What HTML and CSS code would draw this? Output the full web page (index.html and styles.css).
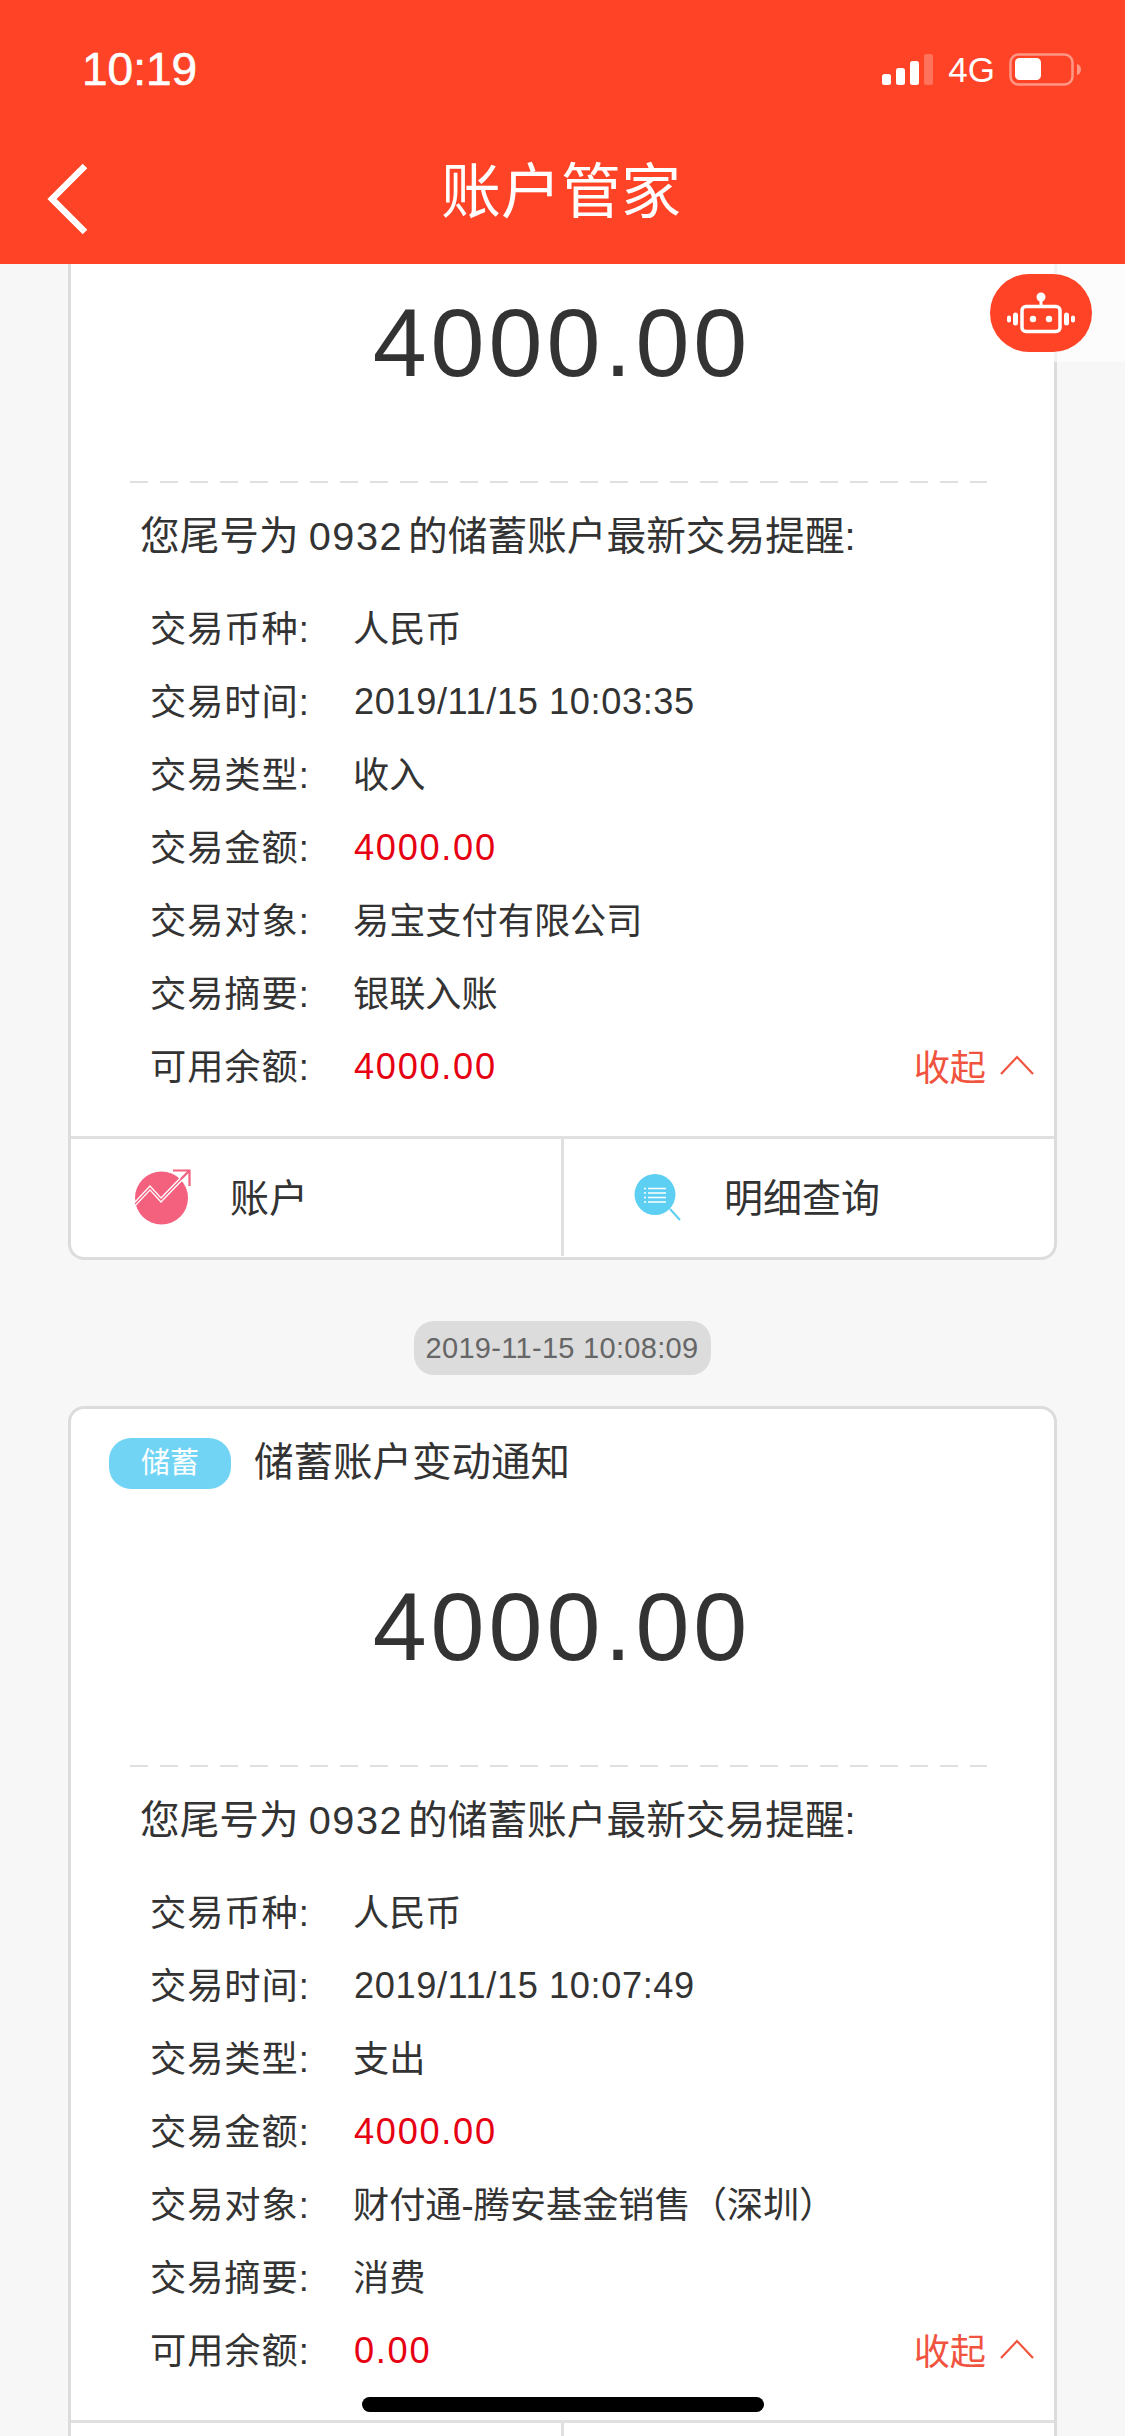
FILE: index.html
```html
<!DOCTYPE html>
<html lang="zh">
<head>
<meta charset="utf-8">
<title>账户管家</title>
<link rel="stylesheet" href="styles.css">
</head>
<body>
<div class="screen">
  <header class="header">
    <div class="status">
      <span class="time">10:19</span>
      <div class="status-right">
        <svg class="signal" width="51" height="31" viewBox="0 0 51 31">
          <rect x="0" y="20" width="9" height="11" rx="2.5" fill="#fff"/>
          <rect x="14" y="14" width="9" height="17" rx="2.5" fill="#fff"/>
          <rect x="28" y="7" width="9" height="24" rx="2.5" fill="#fff"/>
          <rect x="42" y="0" width="9" height="31" rx="2.5" fill="#fff" opacity=".25"/>
        </svg>
        <span class="net">4G</span>
        <svg class="battery" width="72" height="33" viewBox="0 0 72 33">
          <rect x="1.5" y="1.5" width="62" height="30" rx="8" fill="none" stroke="#fff" stroke-opacity=".45" stroke-width="2.5"/>
          <rect x="6" y="5" width="26" height="22" rx="4.5" fill="#fff"/>
          <path d="M68 11c2.6.8 4 3 4 5.500s-1.400 4.700-4 5.500z" fill="#fff" fill-opacity=".45"/>
        </svg>
      </div>
    </div>
    <nav class="nav">
      <svg class="back" width="42" height="72" viewBox="0 0 42 72">
        <path d="M38 3 5 36l33 33" fill="none" stroke="#fff" stroke-width="6.500"/>
      </svg>
      <h1 class="title">账户管家</h1>
    </nav>
  </header>

  <main class="feed">
    <article class="card card-first">
      <div class="head"></div>
      <div class="amount">4000.00</div>
      <div class="dash"></div>
      <p class="intro">您尾号为<span class="intro-num">0932</span>的储蓄账户最新交易提醒:</p>
      <div class="rows">
        <div class="row"><span class="label">交易币种:</span><span>人民币</span></div>
        <div class="row"><span class="label">交易时间:</span><span class="num">2019/11/15 10:03:35</span></div>
        <div class="row"><span class="label">交易类型:</span><span>收入</span></div>
        <div class="row"><span class="label">交易金额:</span><span class="num red">4000.00</span></div>
        <div class="row"><span class="label">交易对象:</span><span>易宝支付有限公司</span></div>
        <div class="row"><span class="label">交易摘要:</span><span>银联入账</span></div>
        <div class="row"><span class="label">可用余额:</span><span class="num red">4000.00</span>
          <span class="toggle">收起<svg class="chev" width="34" height="20" viewBox="0 0 34 20"><path d="M1 19 17 2l16 17" fill="none" stroke="#F0533E" stroke-width="2.200"/></svg></span>
        </div>
      </div>
      <div class="foot">
        <div class="foot-cell foot-a">
          <svg class="ico-a" width="58" height="58" viewBox="0 0 58 58">
            <circle cx="26.500" cy="29" r="26.500" fill="#F3617F"/>
            <path d="M0 35 15 19l11 12L52 4" fill="none" stroke="#fff" stroke-width="4"/>
            <path d="M0 35 15 19l11 12L52 4" fill="none" stroke="#F3617F" stroke-width="1.300"/>
            <path d="M38 1.500h16.500V17M54 2 46 10" fill="none" stroke="#F3617F" stroke-width="2.200"/>
          </svg>
          <span class="foot-label">账户</span>
        </div>
        <div class="foot-cell foot-b">
          <svg class="ico-b" width="48" height="48" viewBox="0 0 48 48">
            <circle cx="21" cy="20.500" r="20.500" fill="#5CCFF2"/>
            <path d="m36 35 10 11" fill="none" stroke="#5CCFF2" stroke-width="2"/>
            <path d="M14 14.500h18M14 19h18M14 23.500h18M14 28h18M10 14.500h2M10 19h2M10 23.500h2M10 28h2" fill="none" stroke="#fff" stroke-width="1.400"/>
          </svg>
          <span class="foot-label">明细查询</span>
        </div>
      </div>
    </article>

    <div class="stamp-wrap"><time class="stamp">2019-11-15 10:08:09</time></div>

    <article class="card">
      <div class="head"><span class="tag">储蓄</span><h2 class="card-title">储蓄账户变动通知</h2></div>
      <div class="amount">4000.00</div>
      <div class="dash"></div>
      <p class="intro">您尾号为<span class="intro-num">0932</span>的储蓄账户最新交易提醒:</p>
      <div class="rows">
        <div class="row"><span class="label">交易币种:</span><span>人民币</span></div>
        <div class="row"><span class="label">交易时间:</span><span class="num">2019/11/15 10:07:49</span></div>
        <div class="row"><span class="label">交易类型:</span><span>支出</span></div>
        <div class="row"><span class="label">交易金额:</span><span class="num red">4000.00</span></div>
        <div class="row"><span class="label">交易对象:</span><span>财付通-腾安基金销售（深圳）</span></div>
        <div class="row"><span class="label">交易摘要:</span><span>消费</span></div>
        <div class="row"><span class="label">可用余额:</span><span class="num red">0.00</span>
          <span class="toggle">收起<svg class="chev" width="34" height="20" viewBox="0 0 34 20"><path d="M1 19 17 2l16 17" fill="none" stroke="#F0533E" stroke-width="2.200"/></svg></span>
        </div>
      </div>
      <div class="foot">
        <div class="foot-cell foot-a"></div>
        <div class="foot-cell foot-b"></div>
      </div>
    </article>
  </main>

  <div class="robot-panel">
    <div class="robot">
      <svg width="70" height="46" viewBox="0 0 70 46">
        <circle cx="35" cy="5" r="4.500" fill="#fff"/>
        <path d="M35 8v6" stroke="#fff" stroke-width="3"/>
        <rect x="16" y="14.500" width="38" height="25" rx="4" fill="none" stroke="#fff" stroke-width="3.500"/>
        <circle cx="27" cy="27" r="3.200" fill="#fff"/>
        <circle cx="43" cy="27" r="3.200" fill="#fff"/>
        <rect x="7" y="20.500" width="5" height="13" rx="2.500" fill="#fff"/>
        <rect x="1" y="23.500" width="4" height="7" rx="2" fill="#fff"/>
        <rect x="58" y="20.500" width="5" height="13" rx="2.500" fill="#fff"/>
        <rect x="65" y="23.500" width="4" height="7" rx="2" fill="#fff"/>
      </svg>
    </div>
  </div>

  <div class="home-bar"></div>
</div>
</body>
</html>
```

FILE: styles.css
```css
* { box-sizing: border-box; }

html, body {
  margin: 0;
  padding: 0;
  width: 1125px;
  height: 2436px;
  overflow: hidden;
}

body {
  font-family: "Liberation Sans", "Noto Sans CJK SC", sans-serif;
  color: #333;
  background: #f7f7f7;
}

.screen {
  position: relative;
  width: 1125px;
  height: 2436px;
  display: flex;
  flex-direction: column;
  overflow: hidden;
}

.header {
  flex: none;
  height: 264px;
  background: #ff4326;
  color: #fff;
  position: relative;
  z-index: 2;
}

.status {
  height: 138px;
  padding: 0 44px 0 82px;
  display: flex;
  align-items: center;
  justify-content: space-between;
}

.time {
  font-size: 46px;
  line-height: 1;
  -webkit-text-stroke: 0.6px #fff;
}

.status-right {
  display: flex;
  align-items: center;
}

.signal { display: block; }

.net {
  margin-left: 15px;
  margin-right: 14px;
  font-size: 35px;
  line-height: 1;
}

.battery { display: block; }

.nav {
  height: 126px;
  padding-bottom: 14px;
  display: flex;
  align-items: center;
  justify-content: center;
  position: relative;
}

.back {
  position: absolute;
  left: 47px;
  top: 25px;
}

.title {
  margin: 0;
  font-size: 60px;
  font-weight: 400;
  line-height: 1;
  padding: 0 3px 3px 0;
}

.feed {
  flex: 1;
  min-height: 0;
  overflow: hidden;
  padding: 0 68px;
}

.card {
  background: #fff;
  border: 3px solid #dcdcdc;
  border-radius: 16px;
  height: 1138px;
  flex: none;
}

.card-first {
  margin-top: -142px;
}

.head {
  height: 80px;
  padding: 29px 0 0 38px;
  display: flex;
  align-items: flex-start;
}

.tag {
  width: 122px;
  height: 51px;
  border-radius: 22px;
  background: #72d4f5;
  color: #fff;
  font-size: 29px;
  line-height: 51px;
  text-align: center;
}

.card-title {
  margin: 1px 0 0 23px;
  font-size: 39.5px;
  font-weight: 400;
  line-height: 46px;
  color: #333;
}

.amount {
  height: 276px;
  display: flex;
  align-items: center;
  justify-content: center;
  font-size: 97px;
  letter-spacing: 4px;
  color: #333;
  padding-right: 1px;
}

.dash {
  height: 2px;
  margin: 0 67px 0 59px;
  background: repeating-linear-gradient(to right, #e0e0e0 0 18px, transparent 18px 30px);
}

.intro {
  margin: 0;
  height: 106px;
  padding: 2px 0 0 69px;
  display: flex;
  align-items: center;
  font-size: 39.7px;
  line-height: 1;
  white-space: nowrap;
}

.intro-num {
  margin: 0 5px 0 10px;
  letter-spacing: 1.5px;
}

.rows {
  padding: 0 20px 0 79px;
  height: 547px;
  font-size: 36.2px;
}

.row {
  height: 73px;
  display: flex;
  align-items: center;
  white-space: nowrap;
}

.label {
  flex: none;
  width: 203px;
  letter-spacing: 1px;
}

.num {
  letter-spacing: 0.6px;
  padding: 7px 0 0 1px;
}

.red {
  color: #e60012;
  letter-spacing: 1.7px;
}

.toggle {
  margin-left: auto;
  display: flex;
  align-items: center;
  gap: 14px;
  padding: 2px 0 0 1px;
  color: #f0533e;
}

.chev { display: block; }

.foot {
  height: 120px;
  border-top: 3px solid #e0e0e0;
  display: flex;
  font-size: 39px;
}

.foot-cell {
  display: flex;
  align-items: center;
}

.foot-label {
  padding-bottom: 5px;
}

.foot-a {
  width: 493px;
  padding-left: 64px;
  gap: 37px;
  border-right: 3px solid #e0e0e0;
}

.foot-b {
  flex: 1;
  padding-left: 70px;
  gap: 42px;
}

.ico-a, .ico-b { display: block; flex: none; }

.stamp-wrap {
  display: flex;
  justify-content: center;
  padding: 61px 0 31px;
}

.stamp {
  width: 297px;
  height: 54px;
  margin-right: 1px;
  border-radius: 20px;
  background: #dcdcdc;
  color: #666;
  font-size: 29px;
  letter-spacing: 0.3px;
  line-height: 54px;
  text-align: center;
}

.robot-panel {
  position: absolute;
  top: 264px;
  left: 979px;
  right: 0;
  height: 98px;
  padding: 10px 0 0 11px;
  background: rgba(255, 255, 255, 0.65);
  border-radius: 40px 0 0 50px;
  z-index: 1;
}

.robot {
  width: 102px;
  height: 78px;
  border-radius: 39px;
  background: #ff4326;
  display: flex;
  align-items: center;
  justify-content: center;
  padding-top: 4px;
}

.home-bar {
  position: absolute;
  left: 362px;
  top: 2397px;
  width: 402px;
  height: 15px;
  border-radius: 8px;
  background: #000;
  z-index: 3;
}
```
